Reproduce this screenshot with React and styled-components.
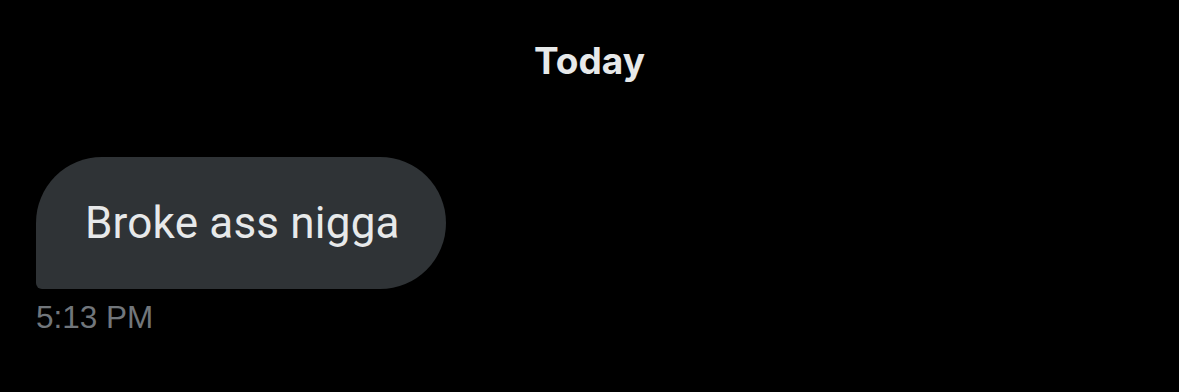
import React from "react";
import styled, { createGlobalStyle } from "styled-components";

const Global = createGlobalStyle`
  html, body { margin: 0; padding: 0; background: #000; }
  body { font-family: Roboto, "Liberation Sans", sans-serif; }
`;

const Page = styled.div`
  width: 1179px;
  height: 392px;
  background: #000;
  display: flex;
  flex-direction: column;
  box-sizing: border-box;
  padding: 38px 0 0 36px;
  overflow: hidden;
`;

const DateLabel = styled.div`
  align-self: center;
  margin-left: -36px;
  font-family: Inter, Roboto, sans-serif;
  font-weight: 700;
  font-size: 37px;
  line-height: 46px;
  color: #e7e9ea;
`;

const Thread = styled.div`
  margin-top: 73px;
  display: flex;
  flex-direction: column;
  align-items: flex-start;
`;

const Bubble = styled.div`
  background: #2f3336;
  color: #e7e9ea;
  border-radius: 66px 66px 66px 6px;
  height: 132px;
  width: 410px;
  box-sizing: border-box;
  padding: 0 0 0 49px;
  display: flex;
  align-items: center;
  font-family: Roboto, sans-serif;
  font-size: 44px;
  letter-spacing: 0.2px;
`;

const Time = styled.div`
  margin-top: 10px;
  font-family: "Liberation Sans", Roboto, sans-serif;
  font-size: 31.5px;
  line-height: 36px;
  color: #71767b;
`;

export default function App() {
  return (
    <>
      <Global />
      <Page>
        <DateLabel>Today</DateLabel>
        <Thread>
          <Bubble>Broke ass nigga</Bubble>
          <Time>5:13 PM</Time>
        </Thread>
      </Page>
    </>
  );
}
